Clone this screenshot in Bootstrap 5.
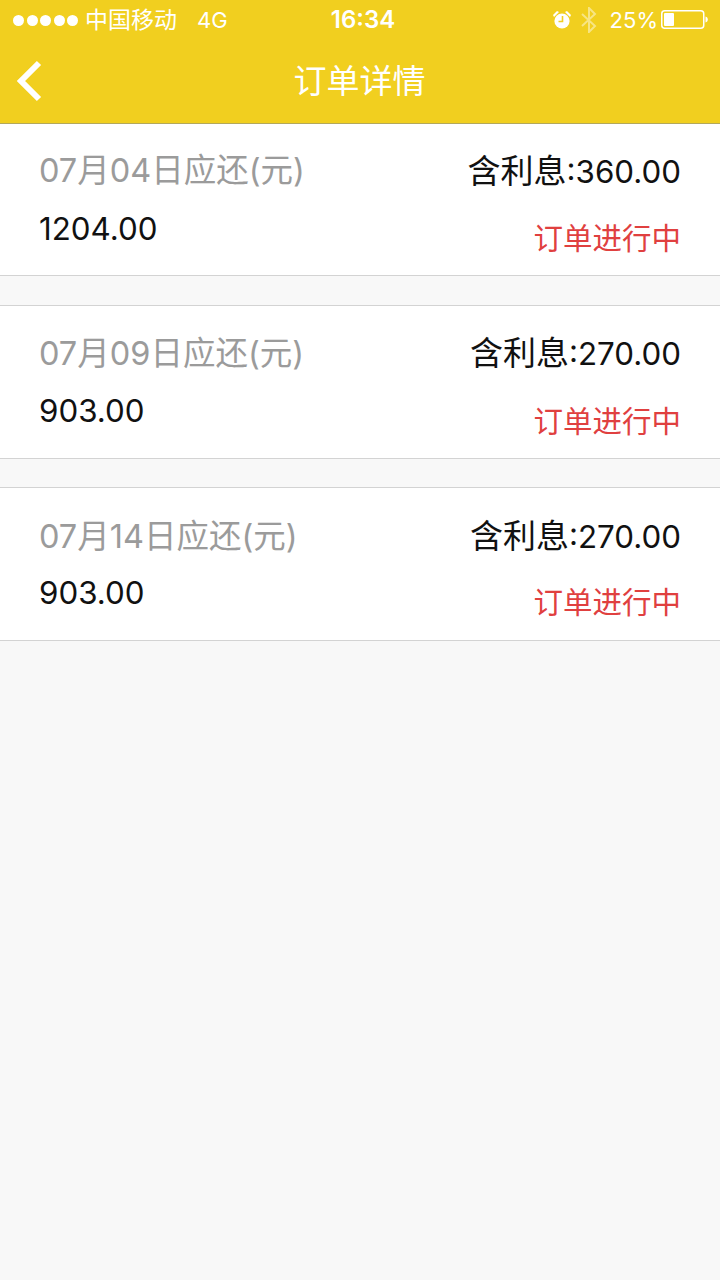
<!DOCTYPE html>
<html lang="zh"><head><meta charset="utf-8">
<link href="https://cdn.jsdelivr.net/npm/bootstrap@5.3.0/dist/css/bootstrap.min.css" rel="stylesheet">
<style>
html,body{height:100%}
body{background:#f8f8f8;font-family:Inter,"Noto Sans CJK SC",sans-serif;color:#111}
.app-head{background:#f1cf1f;height:124px;border-bottom:1px solid #b3a85a;color:#fff}
.stat-bar{height:40px;padding:0 12px 0 13px;font-size:23px;line-height:40px}
.dots{gap:2.500px;width:65px;margin-right:7px}
.dots i{display:block;width:11px;height:11px;border-radius:50%;background:#fff}
.four-g{font-size:22px;margin-left:20px}
.pct{font-size:22px;margin-left:12px;margin-right:3px}
.clock{font-weight:600;font-size:24px;left:6px;right:0;top:0;text-align:center;line-height:40px}
.title-row{height:83px;padding-left:16px;padding-bottom:2px}
.page-title{font-size:33px;left:-1px;right:0;top:59px;line-height:44px;text-align:center}
.order-box{background:#fff;border-top:1px solid #d3d3d3;border-bottom:1px solid #d3d3d3;height:153px;padding:0 39px;margin-bottom:29px}
.order-box.first-box{border-top:0;height:152px}
.order-box.mid-box{height:154px;margin-bottom:28px}
.order-box.last-box{height:154px}
.due-label{color:#9b9b9b;font-size:32.500px;line-height:40px;padding-top:27px}
.amount{font-size:31.300px;line-height:40px;margin-top:18px;color:#111}
.interest{font-size:31.300px;line-height:40px;padding-top:27px;color:#111}
.interest span{font-size:33px}
.state-text{font-size:29.500px;line-height:40px;margin-top:26px;color:#e0403f}
.mid-box .due-label{padding-top:28px}
.mid-box .amount{margin-top:17px}
.mid-box .state-text{margin-top:27px}
.last-box .due-label{padding-top:29px}
.last-box .amount{margin-top:16px}
.last-box .interest{padding-top:28px}
.last-box .state-text{margin-top:25px}
</style></head><body>
<div class="app-head position-relative">
 <div class="stat-bar d-flex align-items-center">
  <div class="dots d-flex"><i></i><i></i><i></i><i></i><i></i></div>
  <span>中国移动</span><span class="four-g">4G</span>
  <div class="ms-auto d-flex align-items-center">
   <svg width="20" height="20" viewBox="0 0 20 20" fill="#fff"><circle cx="10" cy="11" r="7.600"/><path d="M1 5l4-4 2 1-5 5zM19 5l-4-4-2 1 5 5z"/><path d="M10.500 6v5.500H6.500" fill="none" stroke="#f1cf1f" stroke-width="1.600"/></svg>
   <svg class="ms-2" width="18" height="26" viewBox="0 0 18 26" fill="none" stroke="#fff" stroke-opacity=".45" stroke-width="2"><path d="M2 7l13 12-6 6V1l6 6L2 19"/></svg>
   <span class="pct">25%</span>
   <svg width="47" height="20" viewBox="0 0 47 20"><rect x=".75" y=".75" width="42" height="17.500" rx="3" fill="none" stroke="#fff" stroke-width="1.500"/><rect x="3" y="3" width="10" height="13" rx="1" fill="#fff"/><path d="M44.500 6.500c1.500.3 2.300 1.500 2.300 3s-.8 2.700-2.300 3z" fill="#fff"/></svg>
  </div>
 </div>
 <div class="clock position-absolute">16:34</div>
 <div class="title-row d-flex align-items-center">
  <svg width="28" height="42" viewBox="0 0 28 42" fill="none" stroke="#fff" stroke-width="6"><path d="M23 3L5 21l18 18"/></svg>
 </div>
 <div class="page-title position-absolute">订单详情</div>
</div>

<div class="order-box first-box d-flex justify-content-between">
 <div><div class="due-label">07月04日应还(元)</div><div class="amount">1204.00</div></div>
 <div class="text-end"><div class="interest"><span>含利息</span>:360.00</div><div class="state-text">订单进行中</div></div>
</div>
<div class="order-box mid-box d-flex justify-content-between">
 <div><div class="due-label">07月09日应还(元)</div><div class="amount">903.00</div></div>
 <div class="text-end"><div class="interest"><span>含利息</span>:270.00</div><div class="state-text">订单进行中</div></div>
</div>
<div class="order-box last-box d-flex justify-content-between">
 <div><div class="due-label">07月14日应还(元)</div><div class="amount">903.00</div></div>
 <div class="text-end"><div class="interest"><span>含利息</span>:270.00</div><div class="state-text">订单进行中</div></div>
</div>
<script src="https://cdn.jsdelivr.net/npm/bootstrap@5.3.0/dist/js/bootstrap.bundle.min.js"></script>
</body></html>
